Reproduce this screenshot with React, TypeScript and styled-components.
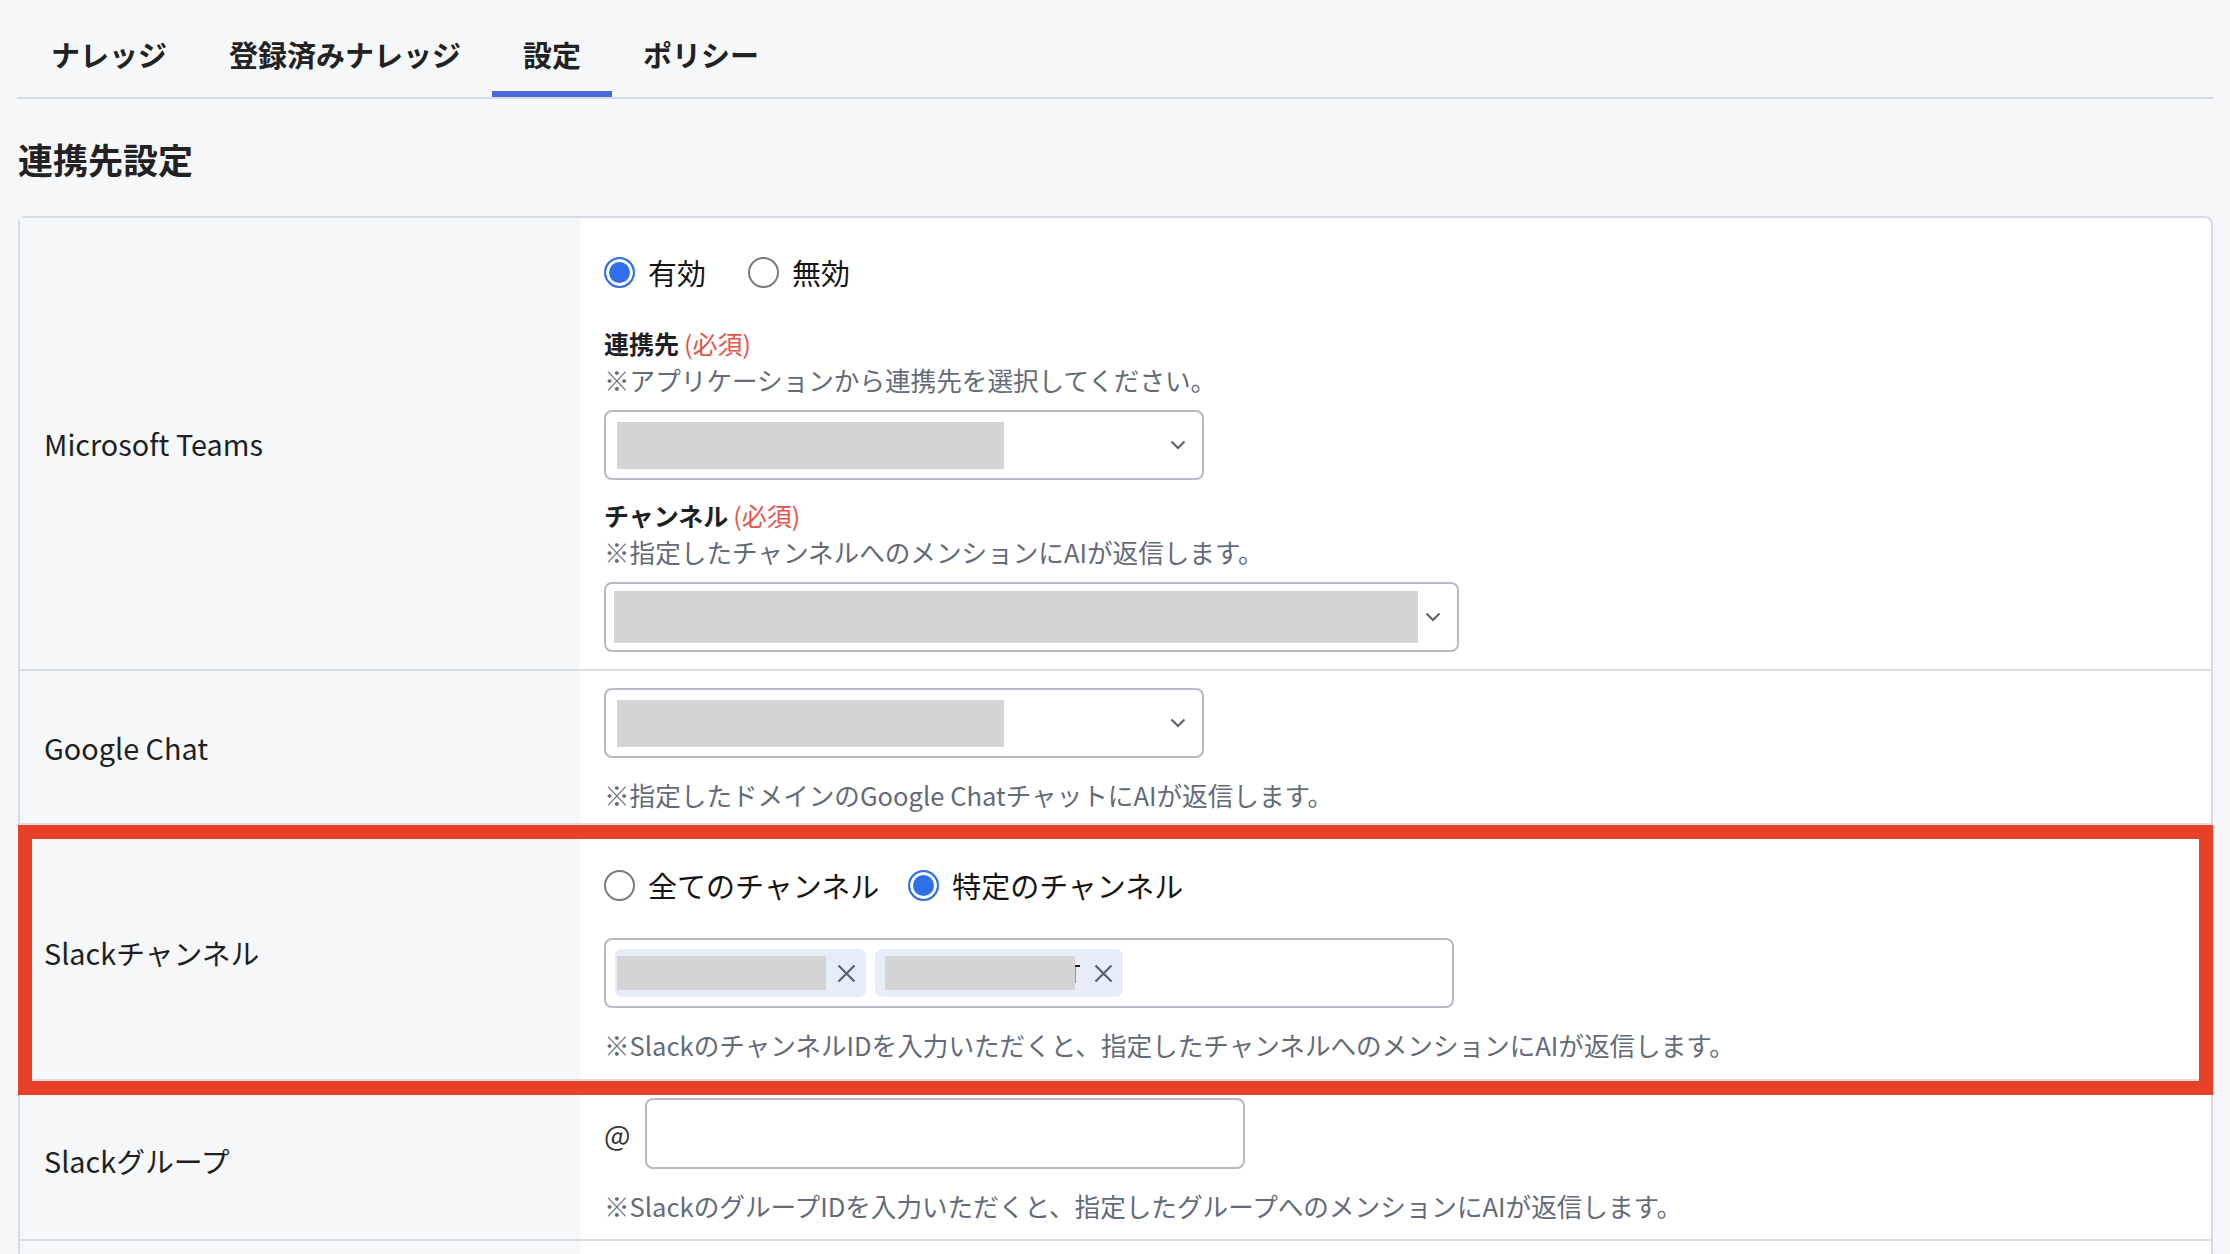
import styled, { createGlobalStyle } from "styled-components";

const GlobalStyle = createGlobalStyle`
  html, body {
    margin: 0;
    background: #f6f7f9;
    font-family: "Noto Sans CJK JP", "Noto Sans", sans-serif;
    color: #1f2023;
  }
`;

const Page = styled.main`
  padding: 0 17px;
`;

const TabBar = styled.nav`
  display: flex;
  padding: 33px 0 0 3px;
  border-bottom: 2px solid #d6dae2;
`;

const Tab = styled.div<{ $active?: boolean }>`
  padding: 0 31px 16px;
  font-size: 29px;
  font-weight: 700;
  line-height: 42px;
  color: #222;
  border-bottom: 6px solid ${(p) => (p.$active ? "#4a68d8" : "transparent")};
`;

const Heading = styled.h2`
  margin: 34px 0 32px 1px;
  font-size: 35px;
  font-weight: 700;
  line-height: 51px;
  color: #222;
`;

const Card = styled.section`
  margin-left: 1px;
  background: #fff;
  border: 2px solid #d6dae2;
  border-radius: 8px;
`;

const Row = styled.div`
  position: relative;
  display: grid;
  grid-template-columns: 560px 1fr;
  border-bottom: 2px solid #d8dce3;
`;

const LabelCell = styled.div`
  display: flex;
  align-items: center;
  padding-left: 24px;
  background: #f6f7f9;
  font-size: 28.8px;
  color: #1e1f22;
`;

const ValueCell = styled.div<{ $padBottom?: number }>`
  padding: 17px 24px ${(p) => p.$padBottom ?? 17}px;
  border-top-right-radius: 6px;
`;

const Highlight = styled.div`
  position: absolute;
  z-index: 1;
  top: 0;
  bottom: -16px;
  left: -2px;
  right: -2px;
  border: 14px solid #e8412a;
  pointer-events: none;
`;

const RadioGroup = styled.div<{ $top: number; $gap: number }>`
  display: flex;
  align-items: center;
  gap: ${(p) => p.$gap}px;
  margin-top: ${(p) => p.$top}px;
`;

const RadioOption = styled.label`
  display: inline-flex;
  align-items: center;
  gap: 13px;
  font-size: 29px;
  line-height: 42px;
  color: #151515;
`;

const RadioDot = styled.span<{ $checked?: boolean }>`
  box-sizing: border-box;
  width: 31px;
  height: 31px;
  border-radius: 50%;
  border: 2.5px solid ${(p) => (p.$checked ? "#2f6fec" : "#7b7b7b")};
  background: ${(p) => (p.$checked ? "#2f6fec" : "#fff")};
  box-shadow: ${(p) => (p.$checked ? "inset 0 0 0 3px #fff" : "none")};
`;

const FieldLabel = styled.div<{ $top: number }>`
  margin-top: ${(p) => p.$top}px;
  font-size: 25px;
  font-weight: 700;
  line-height: 38px;
  color: #1f2023;
`;

const Required = styled.span`
  margin-left: 5px;
  font-weight: 400;
  color: #e0564b;
`;

const Help = styled.p<{ $top?: number }>`
  margin: ${(p) => p.$top ?? 0}px 0 0;
  font-size: 25.6px;
  line-height: 36px;
  color: #636a78;
`;

const SelectBox = styled.div<{ $width: number; $top: number }>`
  box-sizing: border-box;
  display: flex;
  align-items: center;
  justify-content: space-between;
  width: ${(p) => p.$width}px;
  height: 70px;
  margin-top: ${(p) => p.$top}px;
  padding: 0 16px 0 ${(p) => (p.$width > 700 ? 8 : 11)}px;
  border: 2px solid #b5bac6;
  border-radius: 8px;
  background: #fff;
`;

const Redact = styled.span<{ $w: number; $h: number }>`
  display: inline-block;
  width: ${(p) => p.$w}px;
  height: ${(p) => p.$h}px;
  background: #d4d4d4;
`;

const TagInput = styled.div`
  box-sizing: border-box;
  display: flex;
  align-items: center;
  gap: 9px;
  width: 850px;
  height: 70px;
  margin-top: 32px;
  padding: 0 9px;
  border: 2px solid #b5bac6;
  border-radius: 8px;
`;

const Tag = styled.span<{ $padLeft: number }>`
  display: inline-flex;
  align-items: center;
  height: 48px;
  padding: 0 10px 0 ${(p) => p.$padLeft}px;
  background: #e6ecf8;
  border-radius: 7px;
`;

const TagGap = styled.span<{ $w: number }>`
  display: inline-block;
  width: ${(p) => p.$w}px;
`;

const Fragment = styled.span`
  display: inline-block;
  width: 5px;
  overflow: hidden;
  font-size: 24px;
  line-height: 34px;
  color: #222;

  & > span {
    display: inline-block;
    margin-left: -8px;
  }
`;

const AtRow = styled.div`
  display: flex;
  align-items: center;
  gap: 14px;
`;

const AtMark = styled.span`
  font-size: 28px;
  color: #333;
`;

const TextBox = styled.div`
  box-sizing: border-box;
  width: 600px;
  height: 71px;
  border: 2px solid #b5bac6;
  border-radius: 8px;
  background: #fff;
`;

const EmptyCell = styled.div`
  min-height: 140px;
`;

function Chevron() {
  return (
    <svg width="16" height="10" viewBox="0 0 16 10" fill="none">
      <polyline points="1.5,1.5 8,8 14.5,1.5" stroke="#5a6070" strokeWidth="2" />
    </svg>
  );
}

function CloseIcon() {
  return (
    <svg width="19" height="19" viewBox="0 0 19 19" fill="none">
      <path d="M1.5 1.5 L17.5 17.5 M17.5 1.5 L1.5 17.5" stroke="#5a6070" strokeWidth="2.2" />
    </svg>
  );
}

function Radio({ label, checked }: { label: string; checked?: boolean }) {
  return (
    <RadioOption>
      <RadioDot $checked={checked} />
      {label}
    </RadioOption>
  );
}

export default function App() {
  return (
    <Page>
      <GlobalStyle />
      <TabBar>
        <Tab>ナレッジ</Tab>
        <Tab>登録済みナレッジ</Tab>
        <Tab $active>設定</Tab>
        <Tab>ポリシー</Tab>
      </TabBar>

      <Heading>連携先設定</Heading>

      <Card>
        <Row>
          <LabelCell>Microsoft Teams</LabelCell>
          <ValueCell>
            <RadioGroup $top={16} $gap={42}>
              <Radio label="有効" checked />
              <Radio label="無効" />
            </RadioGroup>
            <FieldLabel $top={31}>
              連携先<Required>(必須)</Required>
            </FieldLabel>
            <Help>※アプリケーションから連携先を選択してください。</Help>
            <SelectBox $width={600} $top={12}>
              <Redact $w={387} $h={47} />
              <Chevron />
            </SelectBox>
            <FieldLabel $top={16}>
              チャンネル<Required>(必須)</Required>
            </FieldLabel>
            <Help>※指定したチャンネルへのメンションにAIが返信します。</Help>
            <SelectBox $width={855} $top={12}>
              <Redact $w={804} $h={52} />
              <Chevron />
            </SelectBox>
          </ValueCell>
        </Row>

        <Row>
          <LabelCell>Google Chat</LabelCell>
          <ValueCell $padBottom={10}>
            <SelectBox $width={600} $top={0}>
              <Redact $w={387} $h={47} />
              <Chevron />
            </SelectBox>
            <Help $top={19}>※指定したドメインのGoogle ChatチャットにAIが返信します。</Help>
          </ValueCell>
        </Row>

        <Row>
          <LabelCell>Slackチャンネル</LabelCell>
          <ValueCell $padBottom={16}>
            <RadioGroup $top={22} $gap={29}>
              <Radio label="全てのチャンネル" />
              <Radio label="特定のチャンネル" checked />
            </RadioGroup>
            <TagInput>
              <Tag $padLeft={2}>
                <Redact $w={209} $h={34} />
                <TagGap $w={11} />
                <CloseIcon />
              </Tag>
              <Tag $padLeft={10}>
                <Redact $w={190} $h={34} />
                <Fragment>
                  <span>T</span>
                </Fragment>
                <TagGap $w={14} />
                <CloseIcon />
              </Tag>
            </TagInput>
            <Help $top={19}>
              ※SlackのチャンネルIDを入力いただくと、指定したチャンネルへのメンションにAIが返信します。
            </Help>
          </ValueCell>
          <Highlight />
        </Row>

        <Row>
          <LabelCell>Slackグループ</LabelCell>
          <ValueCell $padBottom={15}>
            <AtRow>
              <AtMark>@</AtMark>
              <TextBox />
            </AtRow>
            <Help $top={19}>
              ※SlackのグループIDを入力いただくと、指定したグループへのメンションにAIが返信します。
            </Help>
          </ValueCell>
        </Row>

        <Row>
          <LabelCell />
          <EmptyCell />
        </Row>
      </Card>
    </Page>
  );
}
